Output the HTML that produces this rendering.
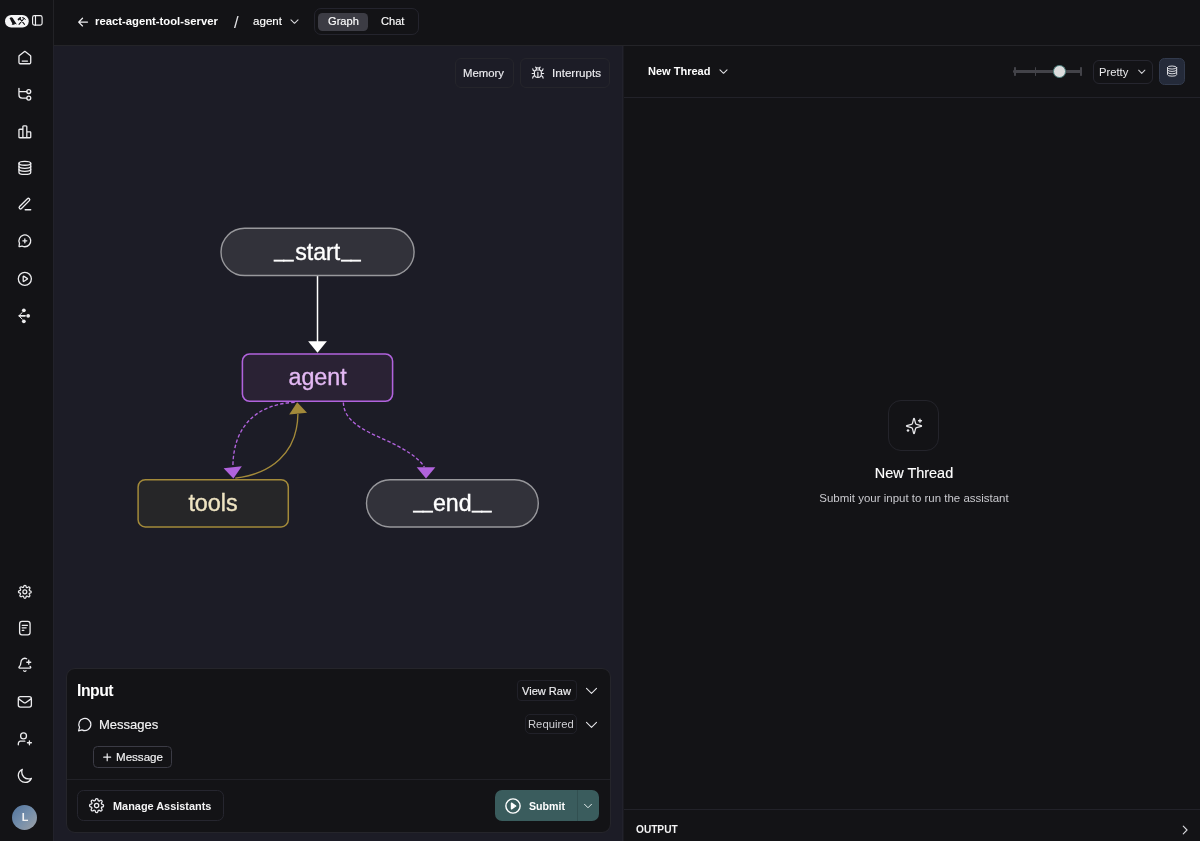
<!DOCTYPE html>
<html lang="en"><head><meta charset="utf-8"><title>LangGraph Studio</title>
<style>
html,body{margin:0;padding:0;background:#131316;}
body{width:1200px;height:841px;position:relative;overflow:hidden;font-family:"Liberation Sans", sans-serif;}
.b{position:absolute;}
.t{position:absolute;will-change:transform;white-space:nowrap;line-height:1;font-weight:400;}
.i{position:absolute;overflow:visible;will-change:transform;}
</style></head><body>
<div class="b" style="left:0px;top:0px;width:1200px;height:841px;background:#131316;"></div>
<div class="b" style="left:54px;top:46px;width:568px;height:795px;background:#1c1c26;"></div>
<div class="b" style="left:53px;top:0px;width:1px;height:46px;background:#222226;"></div>
<div class="b" style="left:53px;top:46px;width:1px;height:795px;background:#22222b;"></div>
<div class="b" style="left:54px;top:45px;width:1146px;height:1px;background:#242428;"></div>
<div class="b" style="left:622px;top:46px;width:1px;height:795px;background:#22222c;"></div>
<div class="b" style="left:623px;top:46px;width:1px;height:795px;background:#1a1a20;"></div>
<div class="b" style="left:624px;top:97px;width:576px;height:1px;background:#222229;"></div>
<div class="b" style="left:624px;top:809px;width:576px;height:1px;background:#222229;"></div>
<svg class="i" style="left:5px;top:14.6px;width:23.75px;height:12.5px" viewBox="0 0 47.5 25"><rect x="0" y="0" width="47.500" height="25" rx="12.500" fill="#f5f5f6"/><path d="M9 6.900L10.800 4.900Q13.600 3.800 15.400 6.200L23.800 19L19.300 17.700L18.800 19.600H13.300L14.600 17.200L11.200 10.600Q10.600 8.400 9 6.900Z" fill="#131316"/><g stroke="#131316" fill="none" stroke-linecap="round" stroke-linejoin="round"><path d="M28 18.800L37.500 7.500M30 7.800L39 18.800" stroke-width="2.100"/><path d="M27 9L30.600 5.800" stroke-width="3.400"/><path d="M35 5.200Q39.200 5 40.600 8.800" stroke-width="2"/></g></svg>
<svg class="i" style="left:31.25px;top:14.35px;width:12.7px;height:12.7px;" viewBox="0 0 24 24" fill="none" stroke="#f0f0f2" stroke-width="2.2" stroke-linecap="round" stroke-linejoin="round"><rect x="3" y="3" width="18" height="18" rx="3.500"/><path d="M8.500 3v18"/></svg>
<svg class="i" style="left:75.70px;top:14.50px;width:14.2px;height:14.2px;" viewBox="0 0 24 24" fill="none" stroke="#f0f0f2" stroke-width="2.1" stroke-linecap="round" stroke-linejoin="round"><path d="M19.5 12H4.500M11 5.500L4.500 12l6.500 6.500"/></svg>
<span class="t" style="top:16.04px;font-size:11.29px;color:#fff;font-weight:700;left:95.3px;">react-agent-tool-server</span>
<span class="t" style="top:13.73px;font-size:16.5px;color:#e4e4e7;left:233.9px;">/</span>
<span class="t" style="top:15.79px;font-size:11.59px;color:#fff;-webkit-text-stroke:0.15px #fff;left:252.6px;">agent</span>
<svg class="i" style="left:287.50px;top:15.40px;width:13px;height:13px;" viewBox="0 0 24 24" fill="none" stroke="#d8d8dc" stroke-width="2" stroke-linecap="round" stroke-linejoin="round"><path d="M5.500 8.800l6.500 6.500 6.500-6.500"/></svg>
<div class="b" style="left:313.5px;top:8px;width:105.5px;height:27px;border:1px solid #24242d;border-radius:7px;box-sizing:border-box;"></div>
<div class="b" style="left:318.2px;top:12.5px;width:49.8px;height:18.2px;background:#3c3c44;border-radius:4.5px;"></div>
<span class="t" style="top:16.10px;font-size:11.1px;color:#fff;-webkit-text-stroke:0.15px #fff;left:328px;">Graph</span>
<span class="t" style="top:16.10px;font-size:11.1px;color:#fff;-webkit-text-stroke:0.15px #fff;left:380.8px;">Chat</span>
<div class="b" style="left:455.3px;top:58.3px;width:58.4px;height:29.5px;background:#1c1c26;border:1px solid #25252b;border-radius:6px;box-sizing:border-box;"></div>
<span class="t" style="top:67.69px;font-size:11.35px;color:#ececf0;-webkit-text-stroke:0.15px #ececf0;left:463.3px;">Memory</span>
<div class="b" style="left:520.3px;top:58.3px;width:89.7px;height:29.5px;background:#1c1c26;border:1px solid #25252b;border-radius:6px;box-sizing:border-box;"></div>
<svg class="i" style="left:530.60px;top:66.10px;width:13.8px;height:13.8px;" viewBox="0 0 24 24" fill="none" stroke="#ececf0" stroke-width="2" stroke-linecap="round" stroke-linejoin="round"><path d="m8 2 1.880 1.880M14.120 3.880 16 2M9 7.130v-1a3.003 3.003 0 1 1 6 0v1M12 20c-3.300 0-6-2.700-6-6v-3a4 4 0 0 1 4-4h4a4 4 0 0 1 4 4v3c0 3.300-2.700 6-6 6M12 20v-9M6.530 9C4.600 8.800 3 7.100 3 5M6 13H2M3 21c0-2.100 1.700-3.900 3.800-4M20.970 5c0 2.100-1.600 3.800-3.500 4M22 13h-4M17.200 17c2.100.1 3.800 1.900 3.800 4"/></svg>
<span class="t" style="top:67.48px;font-size:11.6px;color:#ececf0;-webkit-text-stroke:0.15px #ececf0;left:551.8px;">Interrupts</span>
<span class="t" style="top:65.96px;font-size:11.03px;color:#fff;font-weight:700;left:647.8px;">New Thread</span>
<svg class="i" style="left:716.70px;top:65.20px;width:13px;height:13px;" viewBox="0 0 24 24" fill="none" stroke="#e0e0e4" stroke-width="2" stroke-linecap="round" stroke-linejoin="round"><path d="M5.500 8.800l6.500 6.500 6.500-6.500"/></svg>
<div class="b" style="left:1013px;top:70px;width:69px;height:2.7px;background:#434349;border-radius:1.35px;"></div>
<div class="b" style="left:1014.3px;top:66.6px;width:1.4px;height:9.6px;background:#434349;border-radius:0.7px;"></div>
<div class="b" style="left:1035.1px;top:66.6px;width:1.4px;height:9.6px;background:#434349;border-radius:0.7px;"></div>
<div class="b" style="left:1080.3px;top:66.6px;width:1.4px;height:9.6px;background:#434349;border-radius:0.7px;"></div>
<div class="b" style="left:1053.2px;top:65px;width:12.6px;height:12.6px;background:#dcdcdd;border:1.8px solid #4c807d;border-radius:6.3px;box-sizing:border-box;"></div>
<div class="b" style="left:1092.5px;top:59.5px;width:60px;height:24.3px;border:1px solid #26262f;border-radius:6px;box-sizing:border-box;"></div>
<span class="t" style="top:66.70px;font-size:11.22px;color:#ebebed;left:1098.9px;">Pretty</span>
<svg class="i" style="left:1135.75px;top:65.85px;width:11.5px;height:11.5px;" viewBox="0 0 24 24" fill="none" stroke="#d0d0d4" stroke-width="2.2" stroke-linecap="round" stroke-linejoin="round"><path d="M5.500 8.800l6.500 6.500 6.500-6.500"/></svg>
<div class="b" style="left:1159px;top:58.3px;width:26.3px;height:26.4px;background:#242a39;border:1px solid #323a4c;border-radius:5.5px;box-sizing:border-box;"></div>
<svg class="i" style="left:1166.20px;top:65.30px;width:12.2px;height:12.2px;" viewBox="0 0 24 24" fill="none" stroke="#e2e2e6" stroke-width="1.9" stroke-linecap="round" stroke-linejoin="round"><ellipse cx="12" cy="5" rx="9" ry="3"/><path d="M3 5v14a9 3 0 0 0 18 0V5"/><path d="M3 9.670a9 3 0 0 0 18 0M3 14.330a9 3 0 0 0 18 0"/></svg>
<div class="b" style="left:888.2px;top:400.2px;width:50.8px;height:50.8px;border:1px solid #24242b;border-radius:13px;box-sizing:border-box;"></div>
<svg class="i" style="left:904.50px;top:416.60px;width:18px;height:18px;" viewBox="0 0 24 24" fill="none" stroke="#e6e6e9" stroke-width="1.7" stroke-linecap="round" stroke-linejoin="round"><path d="M9.937 15.500A2 2 0 0 0 8.500 14.063l-6.135-1.582a.5.5 0 0 1 0-.962L8.500 9.936A2 2 0 0 0 9.937 8.500l1.582-6.135a.5.5 0 0 1 .963 0L14.063 8.500A2 2 0 0 0 15.500 9.937l6.135 1.581a.5.5 0 0 1 0 .964L15.500 14.063a2 2 0 0 0-1.437 1.437l-1.582 6.135a.5.5 0 0 1-.963 0z"/><path d="M20 3v4M22 5h-4M4 17v2M5 18H3"/></svg>
<span class="t" style="top:466.27px;font-size:14.45px;color:#fff;-webkit-text-stroke:0.15px #fff;left:913.5px;transform:translateX(-50%);">New Thread</span>
<span class="t" style="top:493.19px;font-size:11.47px;color:#c9c9ce;left:913.5px;transform:translateX(-50%);">Submit your input to run the assistant</span>
<span class="t" style="top:825.32px;font-size:10.14px;color:#f4f4f5;font-weight:700;left:635.8px;letter-spacing:0px;">OUTPUT</span>
<svg class="i" style="left:1178.00px;top:822.50px;width:14px;height:14px;" viewBox="0 0 24 24" fill="none" stroke="#d8d8dc" stroke-width="1.9" stroke-linecap="round" stroke-linejoin="round"><path d="M9 5.500l6.500 6.500-6.500 6.500"/></svg>
<div class="b" style="left:66px;top:667.5px;width:545px;height:165.5px;background:#131316;border:1px solid #25252b;border-radius:9px;box-sizing:border-box;"></div>
<span class="t" style="top:682.63px;font-size:15.8px;color:#fff;font-weight:700;left:76.9px;letter-spacing:-0.5px;">Input</span>
<div class="b" style="left:516.9px;top:679.8px;width:60.3px;height:21.2px;border:1px solid #212129;border-radius:4px;box-sizing:border-box;"></div>
<span class="t" style="top:685.93px;font-size:11.07px;color:#f0f0f2;-webkit-text-stroke:0.15px #f0f0f2;left:522.3px;">View Raw</span>
<svg class="i" style="left:583.70px;top:683.10px;width:15px;height:15px;" viewBox="0 0 24 24" fill="none" stroke="#e4e4e8" stroke-width="1.8" stroke-linecap="round" stroke-linejoin="round"><path d="M4 8.500l8 8 8-8"/></svg>
<svg class="i" style="left:76.30px;top:716.00px;width:17.4px;height:17.4px;" viewBox="0 0 24 24" fill="none" stroke="#ececf0" stroke-width="1.7" stroke-linecap="round" stroke-linejoin="round"><path d="M20.500 11.800a8.300 8.300 0 0 1-12.200 7.300L3.500 20.500l1.400-4.800A8.300 8.300 0 1 1 20.500 11.800z"/></svg>
<span class="t" style="top:718.19px;font-size:13.01px;color:#f4f4f5;-webkit-text-stroke:0.15px #f4f4f5;left:99.2px;">Messages</span>
<div class="b" style="left:524.5px;top:714.3px;width:52.7px;height:20.2px;border:1px solid #212129;border-radius:5px;box-sizing:border-box;"></div>
<span class="t" style="top:718.68px;font-size:11.25px;color:#cfcfd4;left:527.9px;">Required</span>
<svg class="i" style="left:583.70px;top:716.60px;width:15px;height:15px;" viewBox="0 0 24 24" fill="none" stroke="#e4e4e8" stroke-width="1.8" stroke-linecap="round" stroke-linejoin="round"><path d="M4 8.500l8 8 8-8"/></svg>
<div class="b" style="left:93px;top:746.4px;width:78.8px;height:21.4px;border:1px solid #3b3b45;border-radius:4.5px;box-sizing:border-box;"></div>
<svg class="i" style="left:102.10px;top:751.80px;width:10.4px;height:10.4px;" viewBox="0 0 24 24" fill="none" stroke="#f0f0f2" stroke-width="2.7" stroke-linecap="round" stroke-linejoin="round"><path d="M12 4v16M4 12h16"/></svg>
<span class="t" style="top:752.20px;font-size:11.58px;color:#f4f4f5;-webkit-text-stroke:0.15px #f4f4f5;left:116.3px;">Message</span>
<div class="b" style="left:67px;top:779px;width:543px;height:1px;background:#212127;"></div>
<div class="b" style="left:77.1px;top:790.4px;width:146.7px;height:30.2px;border:1px solid #26262f;border-radius:6.5px;box-sizing:border-box;"></div>
<svg class="i" style="left:88.30px;top:796.70px;width:17.2px;height:17.2px;" viewBox="0 0 24 24" fill="none" stroke="#ececf0" stroke-width="1.8" stroke-linecap="round" stroke-linejoin="round"><circle cx="12" cy="12" r="3"/><path d="M18.700 14.700a1.500 1.500 0 0 0 .3 1.650l.05.05a1.820 1.820 0 1 1-2.570 2.570l-.05-.05a1.500 1.500 0 0 0-1.650-.3 1.500 1.500 0 0 0-.91 1.370V20a1.820 1.820 0 1 1-3.640 0v-.08a1.500 1.500 0 0 0-.98-1.370 1.500 1.500 0 0 0-1.650.3l-.05.05a1.820 1.820 0 1 1-2.570-2.570l.05-.05a1.500 1.500 0 0 0 .3-1.650 1.500 1.500 0 0 0-1.370-.91H4a1.820 1.820 0 1 1 0-3.640h.08a1.500 1.500 0 0 0 1.370-.98 1.500 1.500 0 0 0-.3-1.650l-.05-.05a1.820 1.820 0 1 1 2.570-2.570l.05.05a1.500 1.500 0 0 0 1.650.3h.07a1.500 1.500 0 0 0 .91-1.370V4a1.820 1.820 0 1 1 3.640 0v.08a1.500 1.500 0 0 0 .91 1.370 1.500 1.500 0 0 0 1.650-.3l.05-.05a1.820 1.820 0 1 1 2.570 2.570l-.05.05a1.500 1.500 0 0 0-.3 1.650v.07a1.500 1.500 0 0 0 1.370.91H20a1.820 1.820 0 1 1 0 3.640h-.08a1.500 1.500 0 0 0-1.370.91z"/></svg>
<span class="t" style="top:800.66px;font-size:10.92px;color:#f4f4f5;font-weight:700;left:112.5px;">Manage Assistants</span>
<div class="b" style="left:494.8px;top:790.3px;width:104.4px;height:30.6px;background:#3a5c5d;border-radius:7px;"></div>
<div class="b" style="left:577px;top:790.3px;width:1px;height:30.6px;background:#325051;"></div>
<svg class="i" style="left:504.00px;top:796.80px;width:18px;height:18px;" viewBox="0 0 24 24" fill="none" stroke="#ffffff" stroke-width="1.9" stroke-linecap="round" stroke-linejoin="round"><circle cx="12" cy="12" r="9.500"/><path d="M10 8.200l5.600 3.800-5.600 3.800z" fill="#fff"/></svg>
<span class="t" style="top:800.81px;font-size:10.62px;color:#fff;font-weight:700;left:528.6px;">Submit</span>
<svg class="i" style="left:582.00px;top:800.00px;width:12px;height:12px;" viewBox="0 0 24 24" fill="none" stroke="#e6eeee" stroke-width="2" stroke-linecap="round" stroke-linejoin="round"><path d="M5 8.500l7 7 7-7"/></svg>
<svg class="i" style="left:16.80px;top:49.65px;width:15.7px;height:15.7px;" viewBox="0 0 24 24" fill="none" stroke="#ececee" stroke-width="2" stroke-linecap="round" stroke-linejoin="round"><path d="M8 17h8M11.018 2.764 4.235 8.039c-.453.353-.68.53-.843.75a2 2 0 0 0-.318.65C3 9.704 3 9.991 3 10.565V17.8c0 1.12 0 1.68.218 2.108a2 2 0 0 0 .874.874C4.520 21 5.080 21 6.200 21h11.600c1.120 0 1.680 0 2.108-.218a2 2 0 0 0 .874-.874C21 19.480 21 18.920 21 17.800v-7.235c0-.574 0-.861-.074-1.126a2.002 2.002 0 0 0-.318-.65c-.163-.22-.39-.397-.843-.75l-6.783-5.275c-.351-.273-.527-.41-.721-.462a1 1 0 0 0-.522 0c-.194.052-.37.189-.721.462Z"/></svg>
<svg class="i" style="left:16.80px;top:86.35px;width:15.7px;height:15.7px;" viewBox="0 0 24 24" fill="none" stroke="#ececee" stroke-width="2" stroke-linecap="round" stroke-linejoin="round"><path d="M3 3.500v10.200c0 2.660 2.160 4.800 4.800 4.800H15M3 8.500h12"/><circle cx="18" cy="8.500" r="3"/><circle cx="18" cy="18.500" r="3"/></svg>
<svg class="i" style="left:16.80px;top:123.85px;width:15.7px;height:15.7px;" viewBox="0 0 24 24" fill="none" stroke="#ececee" stroke-width="2" stroke-linecap="round" stroke-linejoin="round"><path d="M9 8H4.600c-.56 0-.84 0-1.054.109a1 1 0 0 0-.437.437C3 8.760 3 9.040 3 9.600v9.800c0 .56 0 .84.109 1.054a1 1 0 0 0 .437.437C3.760 21 4.040 21 4.600 21H9m0 0h6m-6 0V4.600c0-.56 0-.84.109-1.054a1 1 0 0 1 .437-.437C9.760 3 10.040 3 10.600 3h2.800c.56 0 .84 0 1.054.109a1 1 0 0 1 .437.437C15 3.760 15 4.040 15 4.600V21m0-9h4.400c.56 0 .84 0 1.054.109a1 1 0 0 1 .437.437C21 12.760 21 13.040 21 13.600v5.800c0 .56 0 .84-.109 1.054a1 1 0 0 1-.437.437C20.240 21 19.960 21 19.400 21H15"/></svg>
<svg class="i" style="left:16.80px;top:160.05px;width:15.7px;height:15.7px;" viewBox="0 0 24 24" fill="none" stroke="#ececee" stroke-width="2" stroke-linecap="round" stroke-linejoin="round"><ellipse cx="12" cy="5" rx="9" ry="3"/><path d="M3 5v14a9 3 0 0 0 18 0V5"/><path d="M3 9.670a9 3 0 0 0 18 0M3 14.330a9 3 0 0 0 18 0"/></svg>
<svg class="i" style="left:16.80px;top:195.85px;width:15.7px;height:15.7px;" viewBox="0 0 24 24" fill="none" stroke="#ececee" stroke-width="2" stroke-linecap="round" stroke-linejoin="round"><rect x="-10.6" y="-2.1" width="21.200" height="4.200" rx="2.100" transform="translate(11.400 11.600) rotate(-45)"/><path d="M12.500 21h8.500"/></svg>
<svg class="i" style="left:16.80px;top:233.10px;width:15.7px;height:15.7px;" viewBox="0 0 24 24" fill="none" stroke="#ececee" stroke-width="2" stroke-linecap="round" stroke-linejoin="round"><path d="M12 9v6M9 12h6M12 21a9 9 0 1 0-8.342-5.616c.081.2.122.3.14.381a.9.9 0 0 1 .024.219c0 .083-.015.173-.045.353l-.593 3.558c-.062.373-.093.559-.035.694a.5.5 0 0 0 .262.262c.135.058.321.027.694-.035l3.558-.593c.18-.03.27-.045.353-.045.081 0 .14.006.219.024.081.018.181.059.381.14A8.975 8.975 0 0 0 12 21z"/></svg>
<svg class="i" style="left:16.95px;top:270.75px;width:15.7px;height:15.7px;" viewBox="0 0 24 24" fill="none" stroke="#ececee" stroke-width="2" stroke-linecap="round" stroke-linejoin="round"><circle cx="12" cy="12" r="10"/><path d="M9.500 8.960c0-.48 0-.72.100-.85a.5.5 0 0 1 .36-.2c.17-.01.370.12.770.38l4.720 3.030c.35.220.52.340.58.480a.5.5 0 0 1 0 .39c-.06.140-.23.250-.58.480l-4.720 3.030c-.4.260-.6.390-.77.380a.5.5 0 0 1-.36-.2c-.1-.13-.1-.37-.1-.85z"/></svg>
<svg class="i" style="left:16.45px;top:307.65px;width:15.7px;height:15.7px;" viewBox="0 0 24 24" fill="none" stroke="#ececee" stroke-width="2" stroke-linecap="round" stroke-linejoin="round"><circle cx="12" cy="3.600" r="2.900" fill="#ececee" stroke="none"/><circle cx="12" cy="20.400" r="2.900" fill="#ececee" stroke="none"/><circle cx="18.600" cy="12" r="2.900" fill="#ececee" stroke="none"/><path d="M5 12h9" stroke-width="2.400"/><path d="M9.500 7L4.300 12l5.200 5" stroke-width="1.500"/></svg>
<svg class="i" style="left:16.85px;top:583.95px;width:15.7px;height:15.7px;" viewBox="0 0 24 24" fill="none" stroke="#ececee" stroke-width="1.9" stroke-linecap="round" stroke-linejoin="round"><circle cx="12" cy="12" r="3"/><path d="M18.700 14.700a1.500 1.500 0 0 0 .3 1.650l.05.05a1.820 1.820 0 1 1-2.570 2.570l-.05-.05a1.500 1.500 0 0 0-1.650-.3 1.500 1.500 0 0 0-.91 1.370V20a1.820 1.820 0 1 1-3.640 0v-.08a1.500 1.500 0 0 0-.98-1.370 1.500 1.500 0 0 0-1.650.3l-.05.05a1.820 1.820 0 1 1-2.570-2.570l.05-.05a1.500 1.500 0 0 0 .3-1.650 1.500 1.500 0 0 0-1.370-.91H4a1.820 1.820 0 1 1 0-3.640h.08a1.500 1.500 0 0 0 1.370-.98 1.500 1.500 0 0 0-.3-1.650l-.05-.05a1.820 1.820 0 1 1 2.570-2.570l.05.05a1.500 1.500 0 0 0 1.650.3h.07a1.500 1.500 0 0 0 .91-1.370V4a1.820 1.820 0 1 1 3.640 0v.08a1.500 1.500 0 0 0 .91 1.370 1.500 1.500 0 0 0 1.650-.3l.05-.05a1.820 1.820 0 1 1 2.570 2.570l-.05.05a1.500 1.500 0 0 0-.3 1.650v.07a1.500 1.500 0 0 0 1.370.91H20a1.820 1.820 0 1 1 0 3.640h-.08a1.500 1.500 0 0 0-1.370.91z"/></svg>
<svg class="i" style="left:16.80px;top:620.45px;width:15.7px;height:15.7px;" viewBox="0 0 24 24" fill="none" stroke="#ececee" stroke-width="2" stroke-linecap="round" stroke-linejoin="round"><rect x="4" y="2" width="16" height="20.800" rx="3.600"/><path d="M8 8.200h8M8 12h6M8 15.800h2.500"/></svg>
<svg class="i" style="left:16.80px;top:657.45px;width:15.7px;height:15.7px;" viewBox="0 0 24 24" fill="none" stroke="#ececee" stroke-width="2" stroke-linecap="round" stroke-linejoin="round"><path d="M10.268 21a2 2 0 0 0 3.464 0M15 8h6M18 5v6M20.002 14.464a9 9 0 0 0 .738.863A1 1 0 0 1 20 17H4a1 1 0 0 1-.74-1.673C4.590 13.956 6 12.499 6 8a6 6 0 0 1 8.750-5.332"/></svg>
<svg class="i" style="left:16.95px;top:694.35px;width:15.7px;height:15.7px;" viewBox="0 0 24 24" fill="none" stroke="#ececee" stroke-width="2" stroke-linecap="round" stroke-linejoin="round"><rect x="2" y="4" width="20" height="16" rx="3.200"/><path d="M2.500 7.500l7.700 5.400a3.100 3.100 0 0 0 3.600 0l7.700-5.400"/></svg>
<svg class="i" style="left:16.80px;top:731.30px;width:15.7px;height:15.7px;" viewBox="0 0 24 24" fill="none" stroke="#ececee" stroke-width="2" stroke-linecap="round" stroke-linejoin="round"><path d="M12 15.500H7.500c-1.396 0-2.093 0-2.661.172a4 4 0 0 0-2.667 2.667C2 18.907 2 19.604 2 21M19 21v-6m-3 3h6M14.500 7.500a4.500 4.500 0 1 1-9 0 4.500 4.500 0 0 1 9 0z"/></svg>
<svg class="i" style="left:16.80px;top:768.15px;width:15.7px;height:15.7px;" viewBox="0 0 24 24" fill="none" stroke="#ececee" stroke-width="2" stroke-linecap="round" stroke-linejoin="round"><path d="M22 15.844a10.424 10.424 0 0 1-4.306.925c-5.779 0-10.463-4.684-10.463-10.462 0-1.536.33-2.994.925-4.307A10.464 10.464 0 0 0 2 11.538C2 17.316 6.684 22 12.462 22c4.243 0 7.896-2.526 9.538-6.156z"/></svg>
<div class="b" style="left:12.1px;top:804.5px;width:25px;height:25px;background:linear-gradient(135deg,#56779f 8%,#748eab 50%,#9a9fa6 95%);border-radius:12.5px;"></div>
<span class="t" style="top:811.86px;font-size:10.8px;color:#f2f2f3;font-weight:700;left:24.6px;transform:translateX(-50%);">L</span>
<svg class="i" style="left:54px;top:46px;width:569px;height:620px" viewBox="54 46 569 620" font-family='"Liberation Sans", sans-serif'><path d="M317.500 276V342" stroke="#ffffff" stroke-width="1.500" fill="none"/><path d="M308.100 341.200h18.800L317.500 352.700z" fill="#ffffff"/><path d="M294.750 402.300C258 404 233 425 232.900 467" stroke="#b163dd" stroke-width="1.350" fill="none" stroke-dasharray="3.500 2.100"/><path d="M223.600 468.300L241.800 466.200L233.400 478.400z" fill="#b163dd"/><path d="M235.300 478.200C270 474 297.500 454 297.900 414" stroke="#a38a3a" stroke-width="1.350" fill="none"/><path d="M289.200 414.500L307.050 412.700L297.200 402.300z" fill="#a38a3a"/><path d="M343.400 402.400C343.600 421 364 430.500 384 439.400S419.500 458 424.300 467.300" stroke="#b163dd" stroke-width="1.350" fill="none" stroke-dasharray="3.500 2.100"/><path d="M416.700 467.300h18.700L426 478.400z" fill="#b163dd"/><rect x="221" y="228.300" width="193.100" height="47.250" rx="23.625" fill="#32323a" stroke="#98989c" stroke-width="1.400"/><rect x="242.400" y="354" width="150.200" height="47.250" rx="7.200" fill="#2a2234" stroke="#b163dd" stroke-width="1.550"/><rect x="138.100" y="479.700" width="150.200" height="47.250" rx="7.200" fill="#262628" stroke="#a38a3a" stroke-width="1.500"/><rect x="366.500" y="479.700" width="171.800" height="47.250" rx="23.625" fill="#32323a" stroke="#98989c" stroke-width="1.400"/><text x="283.85" y="258.1" text-anchor="middle" fill="#ffffff" font-size="17.2" stroke="#ffffff" stroke-width="0.600">__</text><text x="317.7" y="259.5" text-anchor="middle" fill="#ffffff" font-size="23.2" stroke="#ffffff" stroke-width="0.350">start</text><text x="351.1" y="258.1" text-anchor="middle" fill="#ffffff" font-size="17.2" stroke="#ffffff" stroke-width="0.600">__</text><text x="317.6" y="385.1" text-anchor="middle" fill="#e3b8f3" font-size="23.3" stroke="#e3b8f3" stroke-width="0.350">agent</text><text x="213" y="510.7" text-anchor="middle" fill="#efe4c2" font-size="23.3" stroke="#efe4c2" stroke-width="0.350">tools</text><text x="423" y="509.4" text-anchor="middle" fill="#ffffff" font-size="17.2" stroke="#ffffff" stroke-width="0.600">__</text><text x="452.25" y="510.7" text-anchor="middle" fill="#ffffff" font-size="23.2" stroke="#ffffff" stroke-width="0.350">end</text><text x="481.75" y="509.4" text-anchor="middle" fill="#ffffff" font-size="17.2" stroke="#ffffff" stroke-width="0.600">__</text></svg>
</body></html>
